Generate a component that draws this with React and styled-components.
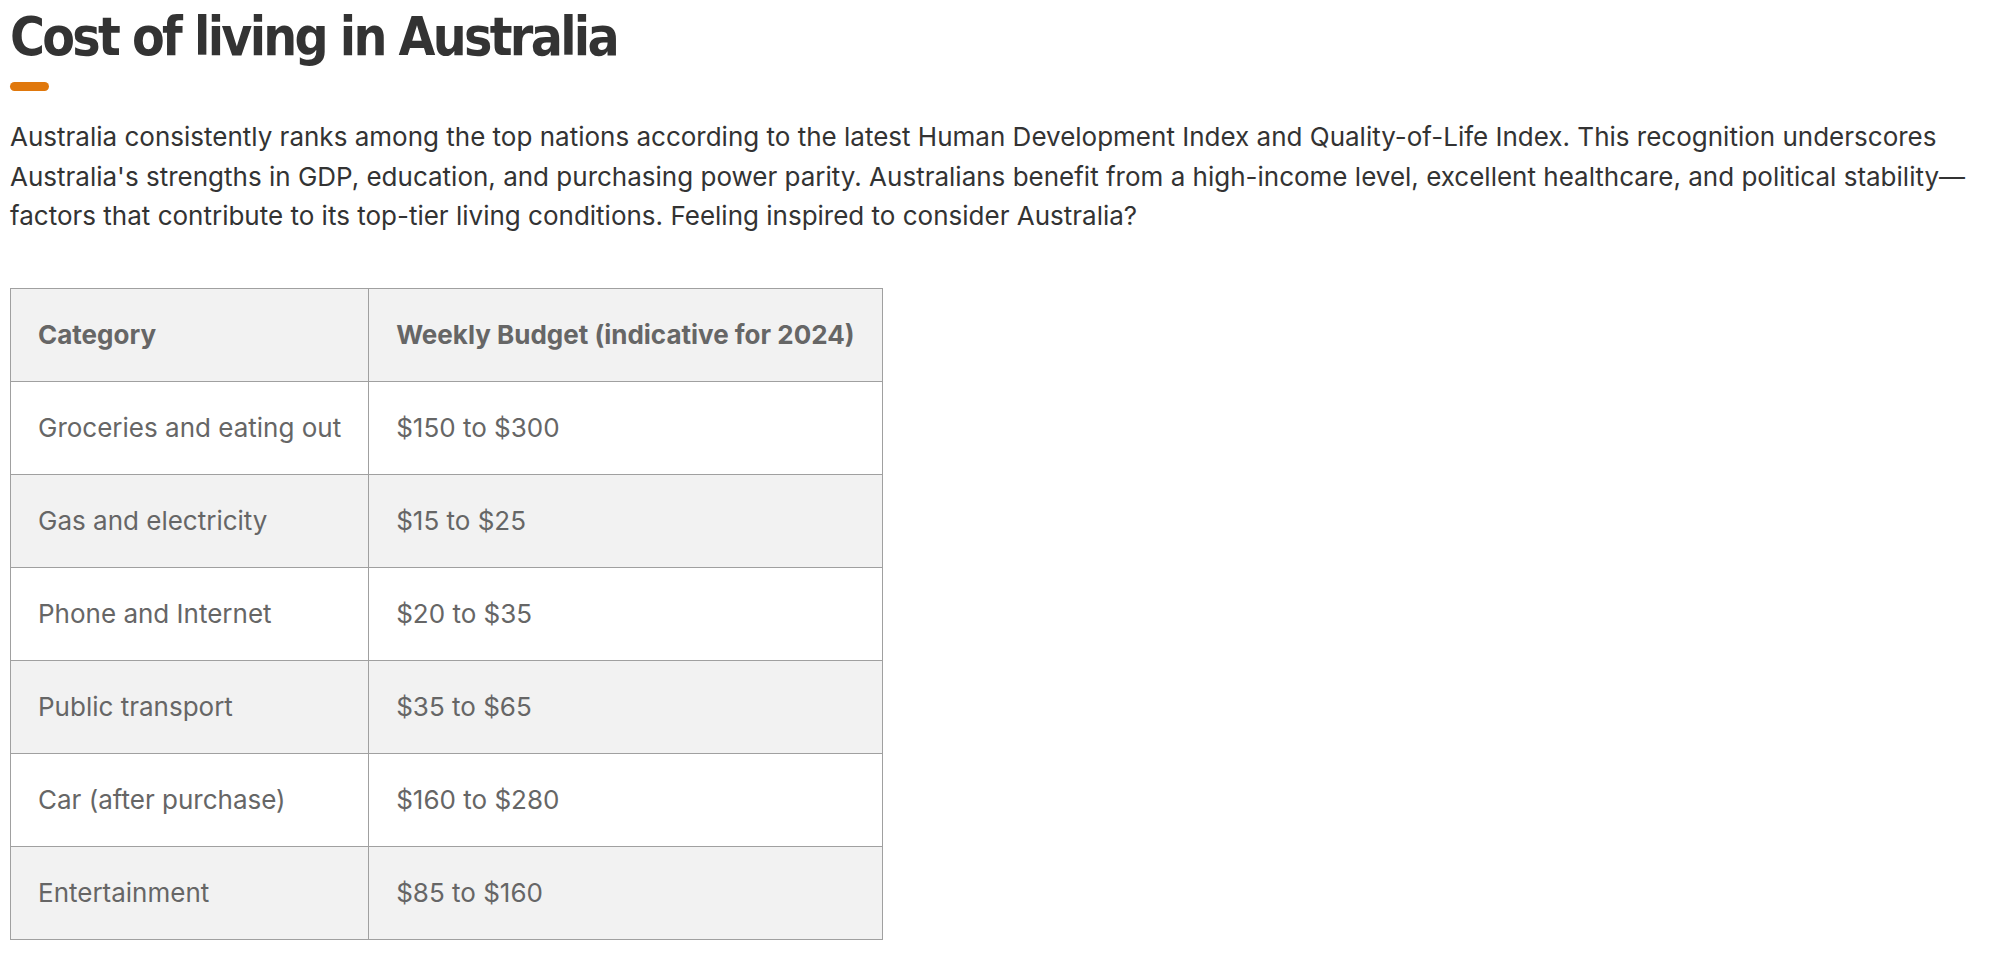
import React from "react";
import styled, { createGlobalStyle } from "styled-components";

const GlobalStyle = createGlobalStyle`
  body {
    margin: 0;
    background: #fff;
    font-family: Inter, "Noto Sans", sans-serif;
  }
`;

const Page = styled.main`
  padding: 0 10px;
`;

const Title = styled.h1`
  margin: 0;
  padding-top: 6px;
  font-family: "DejaVu Sans Condensed", "DejaVu Sans", sans-serif;
  font-weight: 700;
  font-size: 53px;
  line-height: 62px;
  letter-spacing: -2.7px;
  color: #333;
`;

const Accent = styled.span`
  display: block;
  width: 39px;
  height: 9px;
  margin-top: 14px;
  border-radius: 5px;
  background: #e0780c;
`;

const Intro = styled.p`
  margin: 26px 0 0;
  font-size: 26px;
  line-height: 39.5px;
  color: #333;
`;

const Table = styled.table`
  margin-top: 52px;
  border-collapse: collapse;
  font-size: 26px;
  line-height: 38px;
  color: #666;
`;

const Row = styled.tr`
  background: ${(p) => (p.$shade ? "#f2f2f2" : "#fff")};
`;

const HeadCell = styled.th`
  padding: 27px;
  border: 1.5px solid #a0a0a0;
  text-align: left;
  font-weight: 700;
`;

const Cell = styled.td`
  padding: 27px;
  border: 1.5px solid #a0a0a0;
`;

const rows = [
  ["Groceries and eating out", "$150 to $300"],
  ["Gas and electricity", "$15 to $25"],
  ["Phone and Internet", "$20 to $35"],
  ["Public transport", "$35 to $65"],
  ["Car (after purchase)", "$160 to $280"],
  ["Entertainment", "$85 to $160"],
];

export default function App() {
  return (
    <Page>
      <GlobalStyle />
      <Title>Cost of living in Australia</Title>
      <Accent />
      <Intro>
        Australia consistently ranks among the top nations according to the
        latest Human Development Index and Quality-of-Life Index. This
        recognition underscores Australia's strengths in GDP, education, and
        purchasing power parity. Australians benefit from a high-income level,
        excellent healthcare, and political stability—factors that contribute
        to its top-tier living conditions. Feeling inspired to consider
        Australia?
      </Intro>
      <Table>
        <thead>
          <Row $shade>
            <HeadCell>Category</HeadCell>
            <HeadCell>Weekly Budget (indicative for 2024)</HeadCell>
          </Row>
        </thead>
        <tbody>
          {rows.map(([cat, budget], i) => (
            <Row key={cat} $shade={i % 2 === 1}>
              <Cell>{cat}</Cell>
              <Cell>{budget}</Cell>
            </Row>
          ))}
        </tbody>
      </Table>
    </Page>
  );
}
